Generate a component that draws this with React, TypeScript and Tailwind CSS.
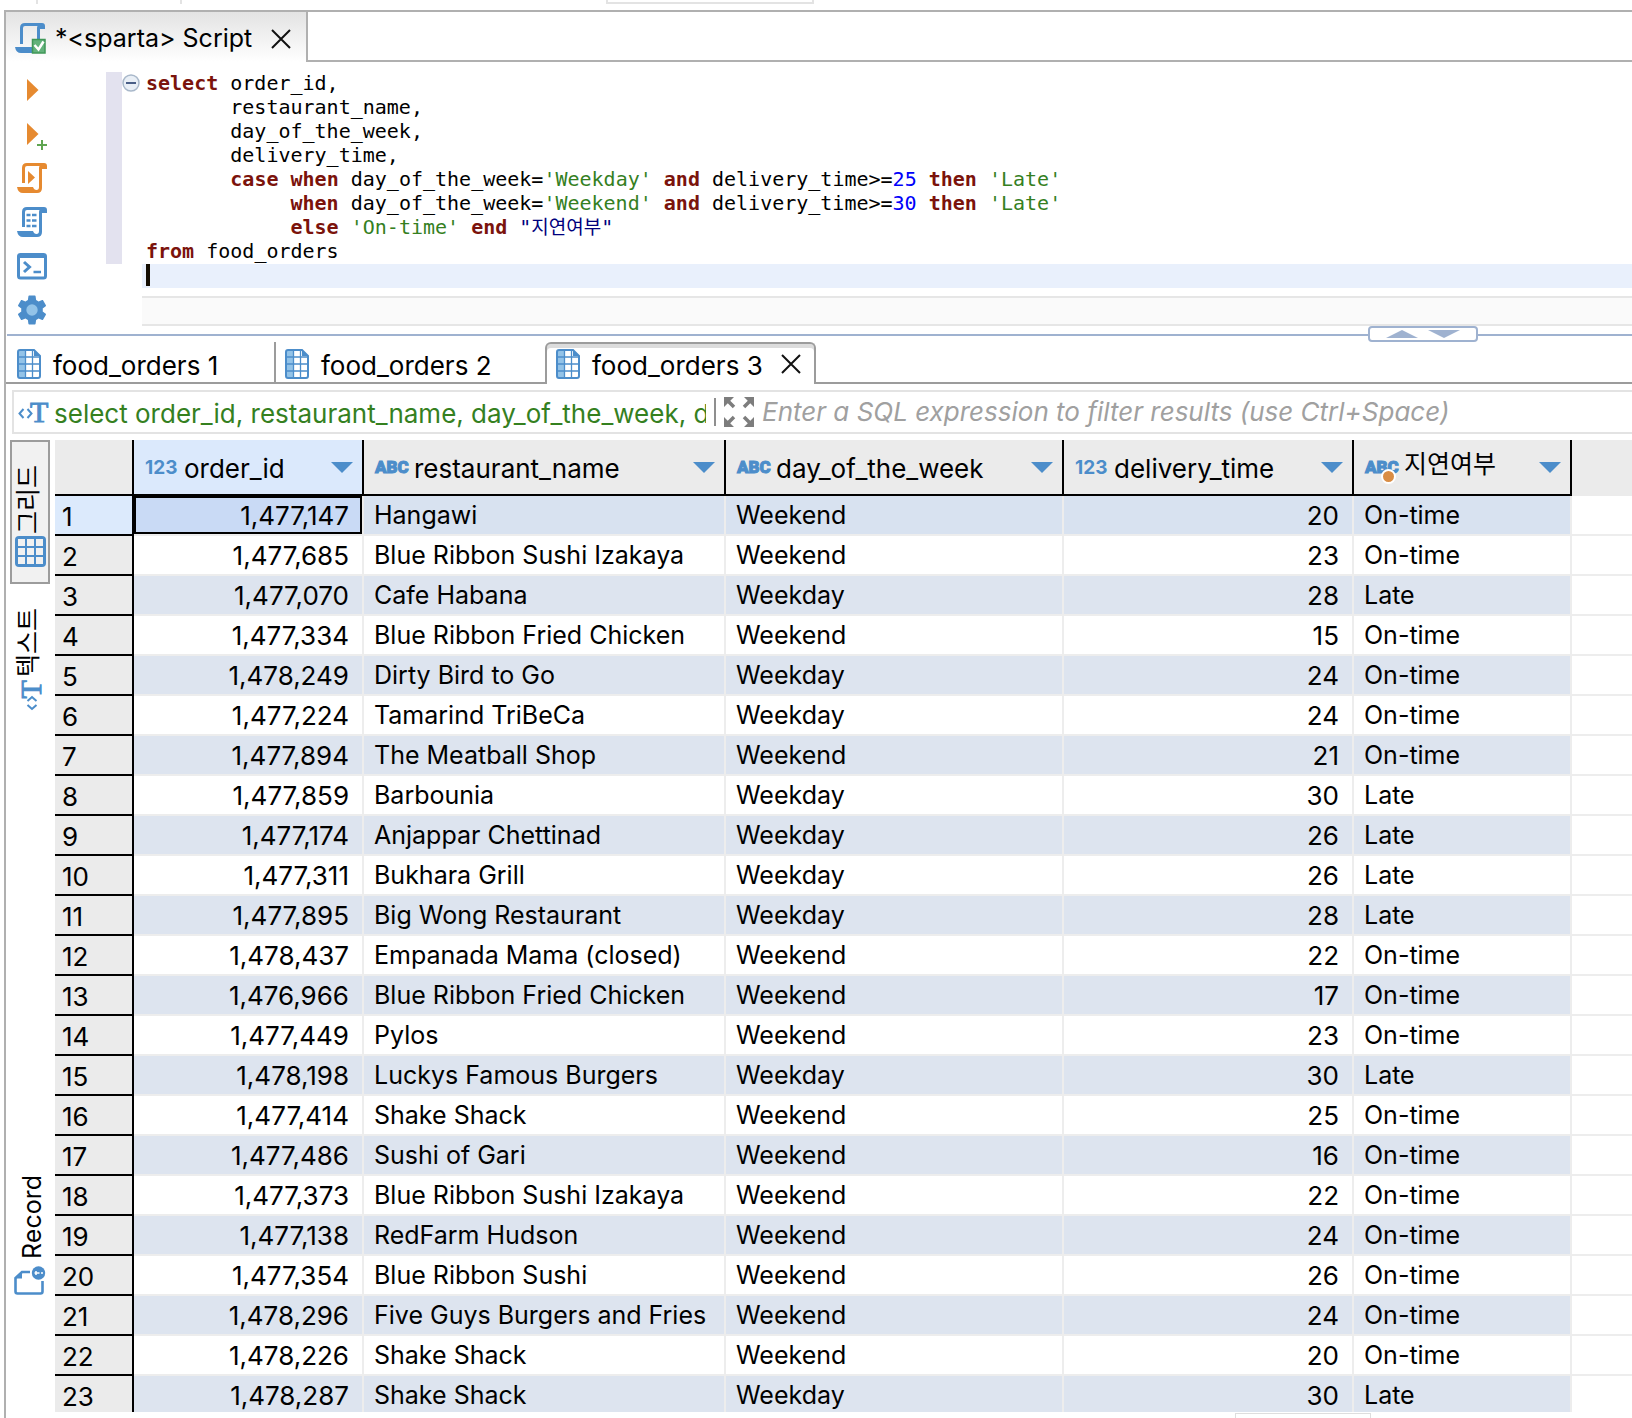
import type { ReactNode } from 'react'
import clsx from 'clsx'

type ColumnType = 'number' | 'string'

interface Column {
  name: string
  type: ColumnType
  width: string
  computed?: boolean
}

const columns: Column[] = [
  { name: 'order_id', type: 'number', width: 'w-[230px]' },
  { name: 'restaurant_name', type: 'string', width: 'w-[362px]' },
  { name: 'day_of_the_week', type: 'string', width: 'w-[338px]' },
  { name: 'delivery_time', type: 'number', width: 'w-[290px]' },
  { name: '지연여부', type: 'string', width: 'w-[218px]', computed: true },
]

const rows: [string, string, string, number, string][] = [
  ['1,477,147', 'Hangawi', 'Weekend', 20, 'On-time'],
  ['1,477,685', 'Blue Ribbon Sushi Izakaya', 'Weekend', 23, 'On-time'],
  ['1,477,070', 'Cafe Habana', 'Weekday', 28, 'Late'],
  ['1,477,334', 'Blue Ribbon Fried Chicken', 'Weekend', 15, 'On-time'],
  ['1,478,249', 'Dirty Bird to Go', 'Weekday', 24, 'On-time'],
  ['1,477,224', 'Tamarind TriBeCa', 'Weekday', 24, 'On-time'],
  ['1,477,894', 'The Meatball Shop', 'Weekend', 21, 'On-time'],
  ['1,477,859', 'Barbounia', 'Weekday', 30, 'Late'],
  ['1,477,174', 'Anjappar Chettinad', 'Weekday', 26, 'Late'],
  ['1,477,311', 'Bukhara Grill', 'Weekday', 26, 'Late'],
  ['1,477,895', 'Big Wong Restaurant', 'Weekday', 28, 'Late'],
  ['1,478,437', 'Empanada Mama (closed)', 'Weekend', 22, 'On-time'],
  ['1,476,966', 'Blue Ribbon Fried Chicken', 'Weekend', 17, 'On-time'],
  ['1,477,449', 'Pylos', 'Weekend', 23, 'On-time'],
  ['1,478,198', 'Luckys Famous Burgers', 'Weekday', 30, 'Late'],
  ['1,477,414', 'Shake Shack', 'Weekend', 25, 'On-time'],
  ['1,477,486', 'Sushi of Gari', 'Weekend', 16, 'On-time'],
  ['1,477,373', 'Blue Ribbon Sushi Izakaya', 'Weekend', 22, 'On-time'],
  ['1,477,138', 'RedFarm Hudson', 'Weekend', 24, 'On-time'],
  ['1,477,354', 'Blue Ribbon Sushi', 'Weekend', 26, 'On-time'],
  ['1,478,296', 'Five Guys Burgers and Fries', 'Weekend', 24, 'On-time'],
  ['1,478,226', 'Shake Shack', 'Weekend', 20, 'On-time'],
  ['1,478,287', 'Shake Shack', 'Weekday', 30, 'Late'],
]

const scrollPath =
  'M5 20V5q0-5 5-5h17q3 0 3 3v3h-5v19q0 5-5 5H6q-5 0-6-6h16q1 3 3.500 3t2.500-3V5q0-1 .5-2H10q-2 0-2 2v15z'

/* Icons */

function PlayIcon({ plus = false }: { plus?: boolean }) {
  return (
    <svg viewBox="0 0 30 30" className="size-[30px] overflow-visible" aria-hidden="true">
      <path d="M10 4l11.500 11L10 26z" fill="#e68a30" />
      {plus && <path d="M20 26h10M25 21v10" stroke="#5fa551" strokeWidth="2" />}
    </svg>
  )
}

function RunScriptIcon() {
  return (
    <svg viewBox="0 0 30 30" className="size-[30px]" fill="#e68a30" aria-hidden="true">
      <path d={scrollPath} />
      <path d="M11 8l7 6.500-7 6.500z" />
    </svg>
  )
}

function PlanIcon() {
  return (
    <svg viewBox="0 0 30 30" className="size-[30px]" fill="#4c8dca" aria-hidden="true">
      <path d={scrollPath} />
      <path d="M9.500 8h4M15 8h4.500M9.500 13.500h4M15 13.500h4.500M9.500 19h4M15 19h4.500" stroke="#4c8dca" strokeWidth="2.500" />
    </svg>
  )
}

function ConsoleIcon() {
  return (
    <svg viewBox="0 0 30 30" className="size-[30px]" fill="none" stroke="#4c8dca" aria-hidden="true">
      <rect x="1.500" y="3.500" width="27" height="23.500" rx="2" strokeWidth="3" />
      <path d="M2 5h26" strokeWidth="4" />
      <path d="M7 11l5.500 5L7 21" strokeWidth="3" />
      <path d="M16.500 21H24" strokeWidth="2.500" />
    </svg>
  )
}

function GearIcon() {
  return (
    <svg viewBox="2 2 20 20" className="size-[30px]" aria-hidden="true">
      <path
        fill="#4c8dca"
        d="M19.140 12.940c.04-.3.06-.61.06-.94 0-.32-.02-.64-.07-.94l2.030-1.580c.18-.14.23-.41.12-.61l-1.920-3.320c-.12-.22-.37-.29-.59-.22l-2.390.96c-.5-.38-1.030-.7-1.620-.94l-.36-2.540c-.04-.24-.24-.41-.48-.41h-3.840c-.24 0-.43.17-.47.41l-.36 2.540c-.59.24-1.130.57-1.620.94l-2.390-.96c-.22-.08-.47 0-.59.22L2.740 8.870c-.12.21-.08.47.12.61l2.030 1.580c-.05.3-.09.63-.09.94s.02.64.07.94l-2.030 1.580c-.18.14-.23.41-.12.61l1.920 3.320c.12.22.37.29.59.22l2.390-.96c.5.38 1.030.7 1.620.94l.36 2.540c.05.24.24.41.48.41h3.840c.24 0 .44-.17.47-.41l.36-2.540c.59-.24 1.130-.56 1.620-.94l2.390.96c.22.08.47 0 .59-.22l1.920-3.320c.12-.22.07-.47-.12-.61l-2.010-1.580z"
      />
      <circle cx="12" cy="12" r="3.800" fill="#93c3e8" />
    </svg>
  )
}

function ScriptIcon() {
  return (
    <svg viewBox="0 0 32 32" className="size-8 shrink-0" aria-hidden="true">
      <path
        fill="#4c8dca"
        d="M5 21V5q0-5 5-5h17q3 0 3 3v3h-5v12h-3V5q0-1 .5-2H10q-2 0-2 2v16zM0 24h17v6H6q-5 0-6-6z"
      />
      <rect x="17.500" y="16.500" width="12.500" height="13.500" fill="#63b27b" stroke="#3f9757" strokeWidth="1.500" />
      <path d="M19.500 22l4 4.500 5-8" fill="none" stroke="#fff" strokeWidth="2.500" />
    </svg>
  )
}

function SheetIcon() {
  return (
    <svg viewBox="0 0 24 30" className="h-[30px] w-6 shrink-0" aria-hidden="true">
      <path d="M3 1h13l7 7v19q0 2-2 2H3q-2 0-2-2V3q0-2 2-2z" fill="#fff" />
      <path d="M1 3q0-2 2-2h6v28H3q-2 0-2-2z" fill="#93c3e8" />
      <path d="M8.500 1v28M15.500 1v28M1 8h22M1 15h22M1 22h22" stroke="#4c8dca" strokeWidth="1.300" />
      <path d="M17 1v6h6z" fill="#4c8dca" />
      <path d="M3 1h14l6 6v20q0 2-2 2H3q-2 0-2-2V3q0-2 2-2z" fill="none" stroke="#4c8dca" strokeWidth="2" />
    </svg>
  )
}

function GridIcon() {
  return (
    <svg viewBox="0 0 31 31" className="size-[31px]" aria-hidden="true">
      <rect width="31" height="31" rx="4" fill="#4c8dca" />
      <path
        fill="#f1f1f1"
        d="M3 3h7v7H3zM12 3h7v7h-7zM21 3h7v7h-7zM3 12h7v7H3zM12 12h7v7h-7zM21 12h7v7h-7zM3 21h7v7H3zM12 21h7v7h-7zM21 21h7v7h-7z"
      />
    </svg>
  )
}

function TextIcon() {
  return (
    <svg viewBox="0 0 31 24" className="h-6 w-[31px] shrink-0 overflow-visible" aria-hidden="true">
      <path d="M5.500 9l-4 4.500 4 4.500M9.500 9l4 4.500-4 4.500" fill="none" stroke="#4c8dca" strokeWidth="2" />
      <text x="12" y="22" fontSize="30" fontFamily="Liberation Serif, serif" fill="#4c8dca" stroke="#4c8dca" strokeWidth="1">
        T
      </text>
    </svg>
  )
}

function RecordIcon() {
  return (
    <svg viewBox="0 0 32 30" className="h-[30px] w-8" aria-hidden="true">
      <path d="M16 6H8L1.500 12v13.500q0 2 2 2h23q2 0 2-2V15" fill="none" stroke="#4c8dca" strokeWidth="2.600" />
      <path d="M8 5v7.500H1z" fill="#4c8dca" />
      <circle cx="24.500" cy="7" r="6.700" fill="#4c8dca" />
      <path d="M20.500 7h5M27 7h2M22 5v4" stroke="#fff" strokeWidth="1.500" />
    </svg>
  )
}

function ExpandIcon() {
  return (
    <svg viewBox="0 0 30 30" className="size-[30px] shrink-0" fill="#7d7d7d" stroke="#7d7d7d" aria-hidden="true">
      <path d="M0 0h10L0 10zM30 0v10L20 0zM0 30V20l10 10zM30 30H20l10-10z" stroke="none" />
      <path d="M3 3l7 7M27 3l-7 7M3 27l7-7M27 27l-7-7" strokeWidth="3.500" />
    </svg>
  )
}

function CloseIcon() {
  return (
    <svg viewBox="0 0 20 20" className="size-5" aria-hidden="true">
      <path d="M1 1l18 18M19 1L1 19" stroke="#111" strokeWidth="2" />
    </svg>
  )
}

/* SQL editor */

const Kw = ({ children }: { children: ReactNode }) => <span className="font-bold text-[#7b130c]">{children}</span>
const Str = ({ children }: { children: ReactNode }) => <span className="text-[#35801f]">{children}</span>
const Num = ({ children }: { children: ReactNode }) => <span className="text-[#0000fa]">{children}</span>

function SqlCode() {
  return (
    <pre className="pb-px pl-1 font-['DejaVu_Sans_Mono','Noto_Sans_CJK_KR',monospace] text-[20px] leading-6">
      <div><Kw>select</Kw> order_id,</div>
      <div>{'       restaurant_name,'}</div>
      <div>{'       day_of_the_week,'}</div>
      <div>{'       delivery_time,'}</div>
      <div>
        {'       '}<Kw>case</Kw> <Kw>when</Kw> day_of_the_week=<Str>'Weekday'</Str> <Kw>and</Kw> delivery_time&gt;=<Num>25</Num> <Kw>then</Kw> <Str>'Late'</Str>
      </div>
      <div>
        {'            '}<Kw>when</Kw> day_of_the_week=<Str>'Weekend'</Str> <Kw>and</Kw> delivery_time&gt;=<Num>30</Num> <Kw>then</Kw> <Str>'Late'</Str>
      </div>
      <div className="h-6">
        {'            '}<Kw>else</Kw> <Str>'On-time'</Str> <Kw>end</Kw>{' '}
        <span className="text-[#00007c]">"<span className="text-[19px]">지연여부</span>"</span>
      </div>
      <div><Kw>from</Kw> food_orders</div>
    </pre>
  )
}

const tools = [
  { name: 'Execute SQL statement', icon: <PlayIcon /> },
  { name: 'Execute in new tab', icon: <PlayIcon plus /> },
  { name: 'Execute SQL script', icon: <RunScriptIcon /> },
  { name: 'Explain execution plan', icon: <PlanIcon /> },
  { name: 'Open console', icon: <ConsoleIcon /> },
  { name: 'Settings', icon: <GearIcon /> },
]

function Editor() {
  return (
    <section className="flex">
      <div className="flex w-[100px] flex-col items-start pt-[6px] pl-[11px]">
        {tools.map((tool) => (
          <button key={tool.name} type="button" aria-label={tool.name} className="flex h-11 items-center">
            {tool.icon}
          </button>
        ))}
      </div>
      <div className="mt-[10px] h-[192px] w-4 bg-[#e3e2ef]" />
      <div className="mt-[10px] w-5">
        <button type="button" aria-label="Collapse" className="flex h-[22px] items-center">
          <svg viewBox="0 0 18 18" className="size-[18px]" aria-hidden="true">
            <circle cx="9" cy="9" r="8" fill="#e9eff6" stroke="#a9b8ca" strokeWidth="1.500" />
            <path d="M4 9h10" stroke="#4a5f87" strokeWidth="2" />
          </svg>
        </button>
      </div>
      <div className="min-w-0 flex-1 pt-[9px] pb-2">
        <SqlCode />
        <div className="h-6 bg-[#e9f0fc] pl-1">
          <div className="h-[22px] w-1 bg-[#140d02]" />
        </div>
        <div className="mt-2 h-[30px] border-y-2 border-[#e6e6e6] bg-[#fafafa]" />
      </div>
    </section>
  )
}

function SplitHandle() {
  return (
    <div className="relative ml-px h-[2px] bg-[#9fb2d0]">
      <div className="absolute -top-2 right-[154px] flex h-4 w-[110px] items-center justify-center gap-[10px] rounded border-2 border-[#9fb2d0] bg-white">
        <svg viewBox="0 0 32 8" className="h-2 w-8" aria-hidden="true">
          <path d="M0 8L16 0l16 8z" fill="#9fb2d0" />
        </svg>
        <svg viewBox="0 0 32 8" className="h-2 w-8" aria-hidden="true">
          <path d="M0 0h32L16 8z" fill="#9fb2d0" />
        </svg>
      </div>
    </div>
  )
}

/* Results */

function ResultTabs() {
  return (
    <div className="mt-[6px] flex h-[42px] text-[26px]">
      <button type="button" className="flex w-[268px] items-center gap-3 border-b-2 border-[#9c9c9c] pt-1 pl-[11px]">
        <SheetIcon />
        <span className="pt-[2px]">food_orders 1</span>
      </button>
      <button type="button" className="flex w-[271px] items-center gap-3 border-b-2 border-l-2 border-[#9c9c9c] pt-1 pl-[9px]">
        <SheetIcon />
        <span className="pt-[2px]">food_orders 2</span>
      </button>
      <div className="flex w-[271px] items-center rounded-t-md border-2 border-b-0 border-[#9c9c9c] pl-[9px] shadow-[inset_0_4px_0_#dcdcdc]">
        <button type="button" className="flex items-center gap-3">
          <SheetIcon />
          <span className="pt-[2px]">food_orders 3</span>
        </button>
        <button type="button" aria-label="Close tab" className="ml-[18px]">
          <CloseIcon />
        </button>
      </div>
      <div className="flex-1 border-b-2 border-[#9c9c9c]" />
    </div>
  )
}

function FilterBar() {
  return (
    <div className="mt-[6px] ml-[6px] flex h-11 items-center border-2 border-r-0 border-[#e3e3e3] pl-1 text-[26px]">
      <TextIcon />
      <div className="ml-[5px] w-[652px] overflow-hidden pt-[2px] whitespace-nowrap text-[#35801f]">
        select order_id, restaurant_name, day_of_the_week, d
      </div>
      <div className="mx-2 h-7 w-[2px] bg-[#8f8f8f]" />
      <button type="button" aria-label="Expand filter">
        <ExpandIcon />
      </button>
      <input
        type="text"
        aria-label="Filter"
        placeholder="Enter a SQL expression to filter results (use Ctrl+Space)"
        className="ml-2 h-9 min-w-0 flex-1 pb-[2px] italic outline-none placeholder:text-[#a0a0a0]"
      />
    </div>
  )
}

function SideTabs() {
  const tab = 'flex w-10 flex-col items-center'
  const label = 'rotate-180 leading-7 [text-orientation:sideways] [writing-mode:vertical-rl]'
  return (
    <div className="flex w-[45px] shrink-0 flex-col pl-1">
      <button type="button" className={clsx(tab, 'h-36 justify-end gap-[2px] border-2 border-[#9c9c9c] bg-[#f1f1f1] pb-[15px]')}>
        <span className={clsx(label, 'mr-1')}>그리드</span>
        <GridIcon />
      </button>
      <button type="button" className={clsx(tab, 'mt-6 gap-[2px]')}>
        <span className={clsx(label, 'mr-1')}>텍스트</span>
        <span className="flex h-[31px] items-center">
          <span className="-rotate-90">
            <TextIcon />
          </span>
        </span>
      </button>
      <button type="button" className={clsx(tab, 'mt-auto mb-[116px] gap-[7px]')}>
        <span className={clsx(label, 'ml-1')}>Record</span>
        <RecordIcon />
      </button>
    </div>
  )
}

function ColumnBadge({ column }: { column: Column }) {
  return (
    <span className="relative w-8 pb-[2px] text-[#4c8dca]">
      {column.type === 'number' ? (
        <span className="text-[19px] font-bold">123</span>
      ) : (
        <span className="font-['Roboto',sans-serif] text-[17px] font-black [-webkit-text-stroke:1px]">ABC</span>
      )}
      {column.computed && (
        <span className="absolute top-[22px] left-4 size-[15px] rounded-full border-2 border-white bg-[#d98d45]" />
      )}
    </span>
  )
}

function ResultGrid() {
  return (
    <table className="w-full table-fixed border-separate border-spacing-0">
      <thead>
        <tr className="h-14">
          <th className="w-[79px] border-r-2 border-b-2 border-black bg-[#ebebeb]" aria-label="Row" />
          {columns.map((column, i) => (
            <th
              key={column.name}
              className={clsx(
                'border-r-2 border-b-2 border-black p-0 font-normal',
                column.width,
                i === 0 ? 'bg-[#dbe9fc]' : 'bg-[#ebebeb]'
              )}
            >
              <div className="flex items-center gap-[7px] pr-[9px] pl-[11px]">
                <ColumnBadge column={column} />
                <span className={clsx('leading-7', column.computed ? 'pb-[6px]' : 'pt-[3px] text-[26px]')}>
                  {column.name}
                </span>
                <button type="button" aria-label={`Sort by ${column.name}`} className="ml-auto">
                  <svg viewBox="0 0 22 11" className="h-[11px] w-[22px]" aria-hidden="true">
                    <path d="M0 0h22L11 11z" fill="#4c8dca" />
                  </svg>
                </button>
              </div>
            </th>
          ))}
          <th className="bg-[#ebebeb]" aria-label="Empty" />
        </tr>
      </thead>
      <tbody>
        {rows.map((row, r) => (
          <tr key={r} className={clsx('h-10', r === 0 ? 'bg-[#d8e2f0]' : r % 2 === 0 && 'bg-[#dde4ef]')}>
            <th
              className={clsx(
                'border-r-2 border-b-2 border-black p-0 pt-[3px] pl-[7px] text-left text-[26px] font-normal',
                r === 0 ? 'bg-[#dceafc]' : 'bg-[#ebebeb]'
              )}
            >
              {r + 1}
            </th>
            {row.map((value, c) => (
              <td
                key={c}
                className={clsx(
                  'border-r-2 border-b-2 border-[#ededed] p-0 whitespace-nowrap',
                  columns[c].type === 'number' ? 'pr-[13px] text-right text-[26px]' : 'pl-[10px]',
                  r === 0 && c === 0 && 'bg-[#c9daf5] shadow-[inset_0_0_0_2px_#000]'
                )}
              >
                {value}
              </td>
            ))}
            <td className="border-b-2 border-[#ededed] bg-white" />
          </tr>
        ))}
      </tbody>
    </table>
  )
}

export default function App() {
  return (
    <div className="flex h-screen flex-col overflow-hidden bg-white font-['Inter','Noto_Sans_CJK_KR',sans-serif] text-[25px] leading-[35px] text-black">
      <div className="flex h-[10px] shrink-0 pl-9">
        <div className="h-1 w-[146px] border-x-2 border-[#e3e3e3]" />
        <div className="ml-[424px] h-1 w-[208px] border-2 border-t-0 border-[#e3e3e3]" />
      </div>

      <main className="ml-1 flex min-h-0 flex-1 flex-col border-t-2 border-l-2 border-[#b0b0b0]">
        {/* Editor tab */}
        <div className="flex h-[50px] shrink-0">
          <div className="flex w-[302px] items-center border-r-2 border-[#b0b0b0] bg-linear-to-b from-[#e3e3e3] to-white pt-[3px] pl-[9px]">
            <ScriptIcon />
            <span className="ml-2">*&lt;sparta&gt; Script</span>
            <button type="button" aria-label="Close script" className="ml-auto mr-[15px]">
              <CloseIcon />
            </button>
          </div>
          <div className="flex-1 border-b-2 border-[#b0b0b0]" />
        </div>

        <Editor />
        <SplitHandle />
        <ResultTabs />
        <FilterBar />

        <div className="mt-[6px] flex min-h-0 flex-1">
          <SideTabs />
          <div className="min-w-0 flex-1 overflow-hidden pl-1">
            <ResultGrid />
          </div>
        </div>

        {/* Top edge of the status box under the grid */}
        <div className="flex h-[6px] shrink-0 items-end justify-end pr-[261px]">
          <div className="h-[5px] w-[136px] border border-b-0 border-[#dedede]" />
        </div>
      </main>
    </div>
  )
}
